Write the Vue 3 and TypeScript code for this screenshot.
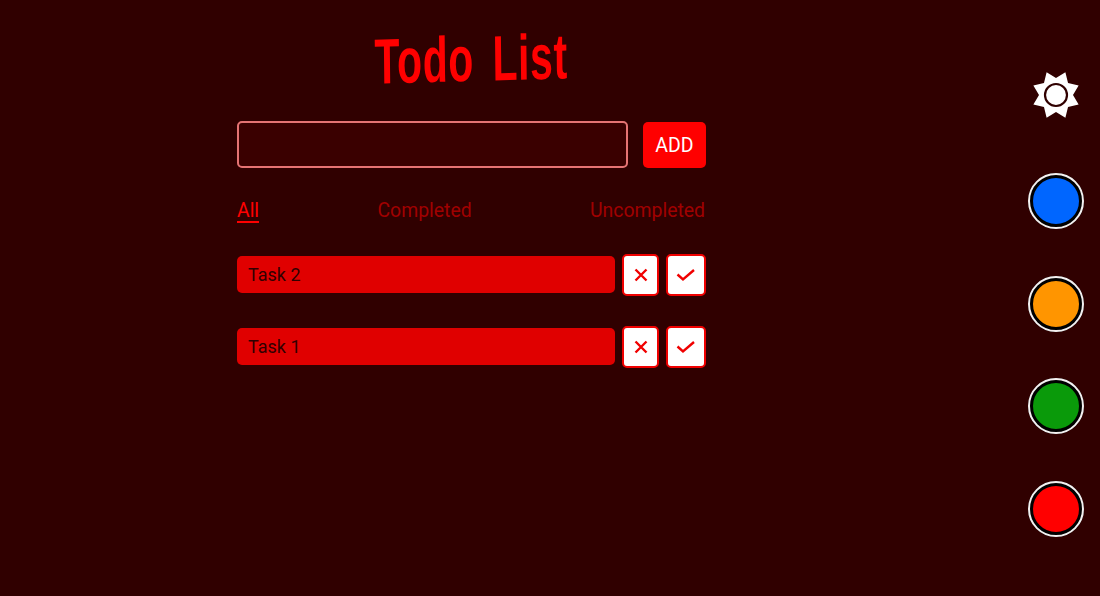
<script setup lang="ts">
const tabs = [
  { label: 'All', active: true },
  { label: 'Completed', active: false },
  { label: 'Uncompleted', active: false },
]
const tasks = ['Task 2', 'Task 1']
const swatches = ['#0066ff', '#ff9500', '#0a9a0a', '#ff0000']
const gearPoints = (() => {
  const pts: string[] = []
  for (let i = 0; i < 16; i++) {
    const r = i % 2 === 0 ? 24.5 : 17
    const a = (Math.PI * 2 * i) / 16 - Math.PI / 2 + Math.PI / 8
    pts.push(`${(25 + r * Math.cos(a)).toFixed(2)},${(25 + r * Math.sin(a)).toFixed(2)}`)
  }
  return pts.join(' ')
})()
</script>

<template>
  <div class="page">
    <main class="column">
      <h1 class="title"><span>Todo List</span></h1>
      <form class="add" @submit.prevent>
        <input class="field" type="text" aria-label="New task" />
        <button class="add-btn" type="submit">ADD</button>
      </form>
      <nav class="tabs">
        <a v-for="t in tabs" :key="t.label" class="tab" :class="{ active: t.active }">{{ t.label }}</a>
      </nav>
      <ul class="list">
        <li v-for="t in tasks" :key="t" class="row">
          <div class="task">{{ t }}</div>
          <button class="act x" aria-label="Delete">
            <svg width="14" height="14" viewBox="0 0 14 14"><path d="M1.5 1.5 12.5 12.5M12.5 1.5 1.5 12.5" stroke="#f00000" stroke-width="2.4" fill="none" /></svg>
          </button>
          <button class="act c" aria-label="Complete">
            <svg width="20" height="14" viewBox="0 0 20 14"><path d="M1.5 6.5 7 11.5 18 2" stroke="#f00000" stroke-width="2.4" fill="none" /></svg>
          </button>
        </li>
      </ul>
    </main>
    <aside class="side">
      <svg class="gear" width="50" height="50" viewBox="0 0 50 50">
        <polygon :points="gearPoints" fill="#fff" />
        <circle cx="25" cy="25" r="11" fill="#fff" stroke="#300000" stroke-width="2.2" />
      </svg>
      <button v-for="s in swatches" :key="s" class="swatch" :style="{ background: s }" aria-label="Theme colour"></button>
    </aside>
  </div>
</template>

<style>
html, body { margin: 0; background: #300000; }
</style>

<style scoped>
.page {
  width: 1100px;
  height: 596px;
  background: #300000;
  display: flex;
  justify-content: space-between;
  overflow: hidden;
  font-family: Roboto, sans-serif;
  box-sizing: border-box;
  padding: 0 16px 0 237px;
}
.column { width: 469px; }
.title {
  margin: 0;
  height: 121px;
  box-sizing: border-box;
  padding-top: 23px;
  text-align: center;
  font-family: "Liberation Sans Narrow", "Liberation Sans", sans-serif;
  font-weight: 700;
  font-size: 64px;
  line-height: 72px;
  color: #ff0000;
  white-space: nowrap;
}
.title span { display: inline-block; transform: scaleX(0.64) rotate(-1deg); letter-spacing: 1px; word-spacing: 10px; }
.add { display: flex; align-items: center; justify-content: space-between; height: 47px; }
.field {
  width: 391px;
  height: 47px;
  box-sizing: border-box;
  background: #3a0000;
  border: 2px solid #e57373;
  border-radius: 5px;
  outline: none;
}
.add-btn {
  width: 63px;
  height: 46px;
  background: #ff0000;
  color: #fff;
  border: none;
  border-radius: 5px;
  font: 400 19.5px/48px Roboto, sans-serif;
  padding: 0;
}
.tabs {
  display: flex;
  justify-content: space-between;
  margin-top: 30px;
  padding-right: 1px;
  font-size: 19.4px;
  line-height: 26px;
}
.tab { color: #a00000; height: 26px; }
.tab.active { color: #ff0000; border-bottom: 2px solid #ff0000; height: 23px; }
.list { list-style: none; margin: 30px 0 0; padding: 0; display: flex; flex-direction: column; gap: 30px; }
.row { display: flex; align-items: flex-start; height: 42px; }
.task {
  width: 378px;
  height: 37px;
  margin-top: 2px;
  box-sizing: border-box;
  background: #e00000;
  border-radius: 5px;
  color: #300000;
  font-size: 18px;
  line-height: 37px;
  padding-left: 11px;
}
.act {
  height: 42px;
  box-sizing: border-box;
  background: #fff;
  border: 2px solid #f00000;
  border-radius: 5px;
  padding: 0;
  display: flex;
  align-items: center;
  justify-content: center;
}
.act.x { width: 37px; margin-left: 7px; }
.act.c { width: 40px; margin-left: 7px; }
.side {
  width: 56px;
  display: flex;
  flex-direction: column;
  align-items: center;
  padding-top: 70px;
}
.gear { display: block; margin-bottom: 53px; }
.swatch {
  width: 56px;
  height: 56px;
  box-sizing: border-box;
  border-radius: 50%;
  border: 5px solid #000;
  outline: 2px solid #f4f0f0;
  outline-offset: -2px;
  padding: 0;
  margin-bottom: 46.5px;
}
</style>
